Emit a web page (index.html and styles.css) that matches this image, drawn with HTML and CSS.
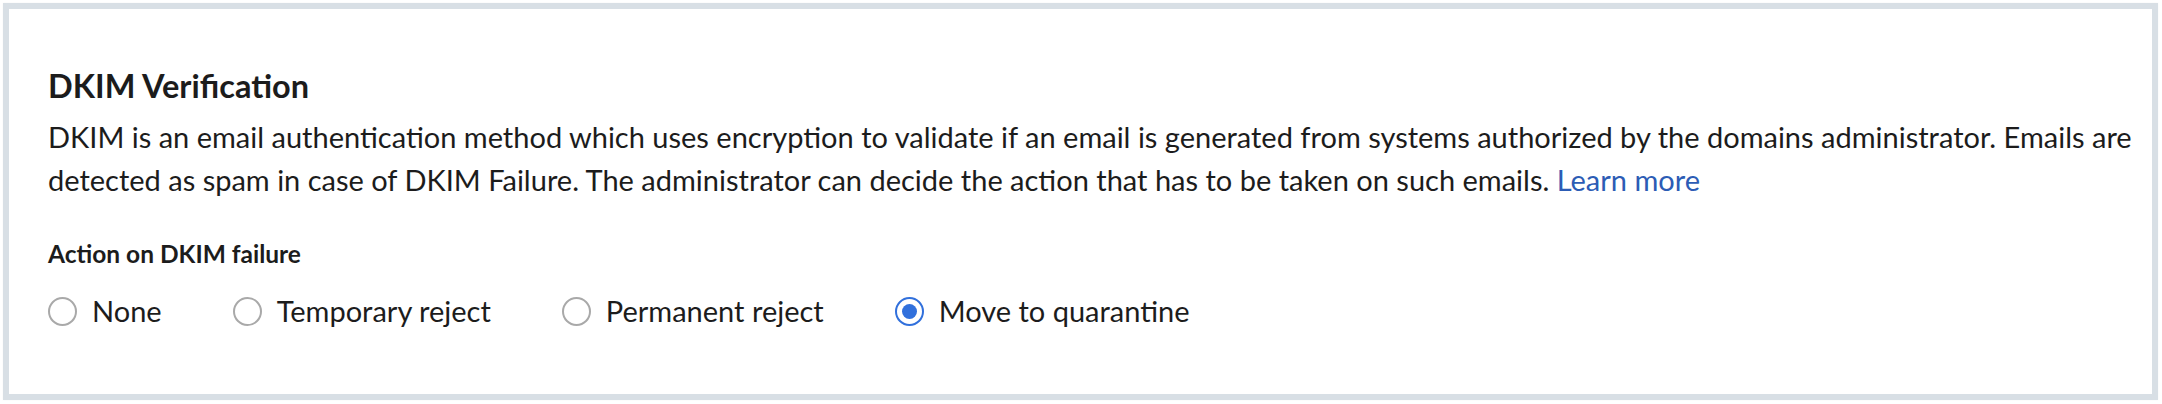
FILE: index.html
```html
<!DOCTYPE html>
<html lang="en">
<head>
<meta charset="utf-8">
<title>DKIM Verification</title>
<link rel="stylesheet" href="styles.css">
</head>
<body>
<div class="page">
  <section class="card">
    <h2 class="title">DKIM Verification</h2>
    <p class="desc">DKIM is an email authentication method which uses encryption to validate if an email is generated from systems authorized by the domains administrator. Emails are detected as spam in case of DKIM Failure. The administrator can decide the action that has to be taken on such emails. <a class="link" href="#">Learn more</a></p>
    <h3 class="subtitle">Action on DKIM failure</h3>
    <div class="options">
      <label class="option"><span class="radio"></span><span class="label">None</span></label>
      <label class="option"><span class="radio"></span><span class="label">Temporary reject</span></label>
      <label class="option"><span class="radio"></span><span class="label">Permanent reject</span></label>
      <label class="option"><span class="radio checked"></span><span class="label">Move to quarantine</span></label>
    </div>
  </section>
</div>
</body>
</html>
```
FILE: styles.css
```css
* { box-sizing: border-box; }
html, body { margin: 0; padding: 0; background: #ffffff; }
body { font-family: Lato, "Open Sans", sans-serif; color: #1c1c1c; }
.page { padding: 3px 4px 4px 3px; }
.card {
  border: 6px solid #d8dfe5;
  background: #fff;
  padding: 59px 16px 65px 39px;
  height: 397px;
  box-shadow: 0 0 2px rgba(0,0,0,0.04);
}
.title {
  margin: 0;
  font-size: 32.5px;
  line-height: 36px;
  font-weight: 700;
}
.desc {
  margin: 11px 0 0;
  font-size: 29px;
  line-height: 43px;
  font-weight: 400;
}
.link { color: #2c5cb5; text-decoration: none; }
.subtitle {
  margin: 36px 0 0;
  font-size: 24.5px;
  line-height: 34px;
  font-weight: 700;
}
.options {
  display: flex;
  align-items: center;
  gap: 71px;
  margin-top: 23px;
}
.option {
  display: flex;
  align-items: center;
  gap: 15px;
  font-size: 29px;
  line-height: 34px;
}
.radio {
  width: 29px;
  height: 29px;
  border-radius: 50%;
  border: 2.5px solid #a9a9a9;
  display: flex;
  align-items: center;
  justify-content: center;
  flex: none;
}
.radio.checked { border-color: #3170dc; }
.radio.checked::after {
  content: "";
  width: 15px;
  height: 15px;
  border-radius: 50%;
  background: #3170dc;
}
```
